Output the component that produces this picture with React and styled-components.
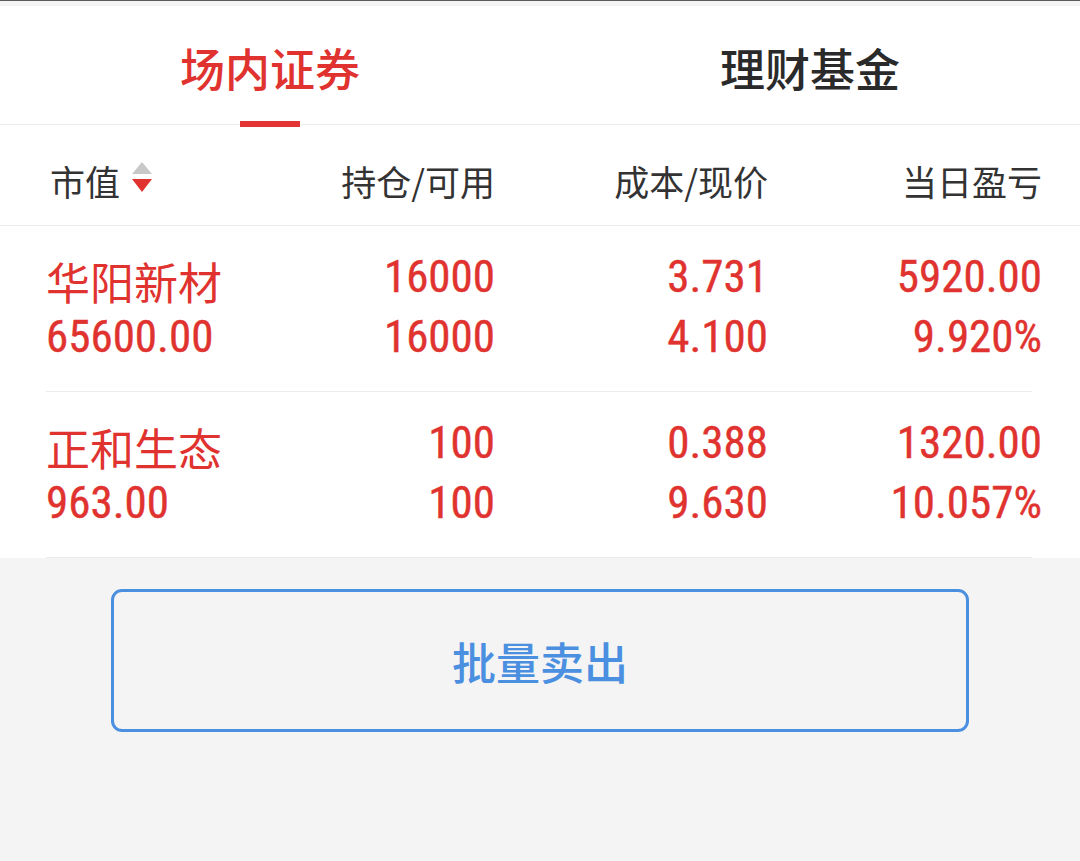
import React from "react";
import styled, { createGlobalStyle } from "styled-components";

const RED = "#e0332f";
const BLUE = "#4a8fe0";

const Global = createGlobalStyle`
  html, body { margin: 0; padding: 0; }
  body {
    background: #f4f4f4;
    font-family: "Noto Sans CJK SC", "Noto Sans", sans-serif;
  }
`;

const Page = styled.div`
  width: 1080px;
  height: 861px;
  background: #f4f4f4;
  border-top: 1px solid #5a5a5a;
  box-sizing: border-box;
  overflow: hidden;
`;

const StatusGap = styled.div`
  height: 5px;
  background: #f4f4f4;
`;

const Tabs = styled.div`
  display: grid;
  grid-template-columns: 1fr 1fr;
  height: 118px;
  background: #fff;
  border-bottom: 1px solid #ececec;
`;

const Tab = styled.div`
  position: relative;
  display: flex;
  align-items: center;
  justify-content: center;
  padding-top: 4px;
  box-sizing: border-box;
  font-size: 45px;
  font-weight: 500;
  color: ${(p) => (p.$active ? RED : "#2a2a2a")};
  &::after {
    content: "";
    display: ${(p) => (p.$active ? "block" : "none")};
    position: absolute;
    left: 50%;
    bottom: -3px;
    width: 60px;
    height: 6px;
    margin-left: -30px;
    background: #e33535;
  }
`;

const List = styled.div`
  background: #fff;
`;

const Grid = styled.div`
  display: grid;
  grid-template-columns: 200px 249px 273px 274px;
  padding: 0 36px 0 46px;
`;

const HeaderRow = styled(Grid)`
  height: 101px;
  align-items: center;
  border-bottom: 1px solid #ececec;
  font-size: 35px;
  color: #333;
  padding-top: 10px;
  box-sizing: border-box;
`;

const HeadCell = styled.div`
  display: flex;
  align-items: center;
  justify-content: ${(p) => (p.$left ? "flex-start" : "flex-end")};
  padding-left: ${(p) => (p.$left ? "4px" : "0")};
  gap: 12px;
`;

const SortIcon = styled.span`
  display: inline-flex;
  flex-direction: column;
  align-items: center;
  gap: 5px;
  margin-top: -6px;
`;

const Tri = styled.span`
  display: block;
  width: 0;
  height: 0;
  border-left: 10px solid transparent;
  border-right: 10px solid transparent;
  ${(p) =>
    p.$up
      ? `border-bottom: 12px solid #c8c8c8;`
      : `border-top: 13px solid ${RED};`}
`;

const Row = styled(Grid)`
  position: relative;
  height: 166px;
  box-sizing: border-box;
  padding-top: 21px;
  color: ${RED};
  &::after {
    content: "";
    position: absolute;
    left: 46px;
    right: 48px;
    bottom: 0;
    height: 1px;
    background: #ececec;
  }
`;

const Cell = styled.div`
  display: flex;
  flex-direction: column;
  align-items: ${(p) => (p.$left ? "flex-start" : "flex-end")};
`;

const Name = styled.div`
  font-size: 44px;
  line-height: 60px;
  height: 60px;
  margin-top: 4px;
  margin-bottom: -4px;
`;

const Num = styled.div`
  font-family: "Liberation Sans Narrow", "Roboto Condensed", Roboto, sans-serif;
  font-size: 45px;
  line-height: 60px;
  height: 60px;
  -webkit-text-stroke: 0.4px currentColor;
`;

const Footer = styled.div`
  padding: 31px 111px 0 111px;
`;

const Button = styled.button`
  width: 100%;
  height: 143px;
  border: 3px solid ${BLUE};
  border-radius: 11px;
  background: #f4f4f4;
  color: ${BLUE};
  font-family: "Noto Sans CJK SC", sans-serif;
  font-size: 44px;
  font-weight: 500;
  padding: 0;
  cursor: pointer;
`;

const rows = [
  { name: "华阳新材", mv: "65600.00", hold: "16000", avail: "16000", cost: "3.731", price: "4.100", pl: "5920.00", pct: "9.920%" },
  { name: "正和生态", mv: "963.00", hold: "100", avail: "100", cost: "0.388", price: "9.630", pl: "1320.00", pct: "10.057%" },
];

export default function App() {
  return (
    <Page>
      <Global />
      <StatusGap />
      <Tabs>
        <Tab $active>场内证券</Tab>
        <Tab>理财基金</Tab>
      </Tabs>
      <List>
        <HeaderRow>
          <HeadCell $left>
            市值
            <SortIcon>
              <Tri $up />
              <Tri />
            </SortIcon>
          </HeadCell>
          <HeadCell>持仓/可用</HeadCell>
          <HeadCell>成本/现价</HeadCell>
          <HeadCell>当日盈亏</HeadCell>
        </HeaderRow>
        {rows.map((r) => (
          <Row key={r.name}>
            <Cell $left>
              <Name>{r.name}</Name>
              <Num>{r.mv}</Num>
            </Cell>
            <Cell>
              <Num>{r.hold}</Num>
              <Num>{r.avail}</Num>
            </Cell>
            <Cell>
              <Num>{r.cost}</Num>
              <Num>{r.price}</Num>
            </Cell>
            <Cell>
              <Num>{r.pl}</Num>
              <Num>{r.pct}</Num>
            </Cell>
          </Row>
        ))}
      </List>
      <Footer>
        <Button>批量卖出</Button>
      </Footer>
    </Page>
  );
}
